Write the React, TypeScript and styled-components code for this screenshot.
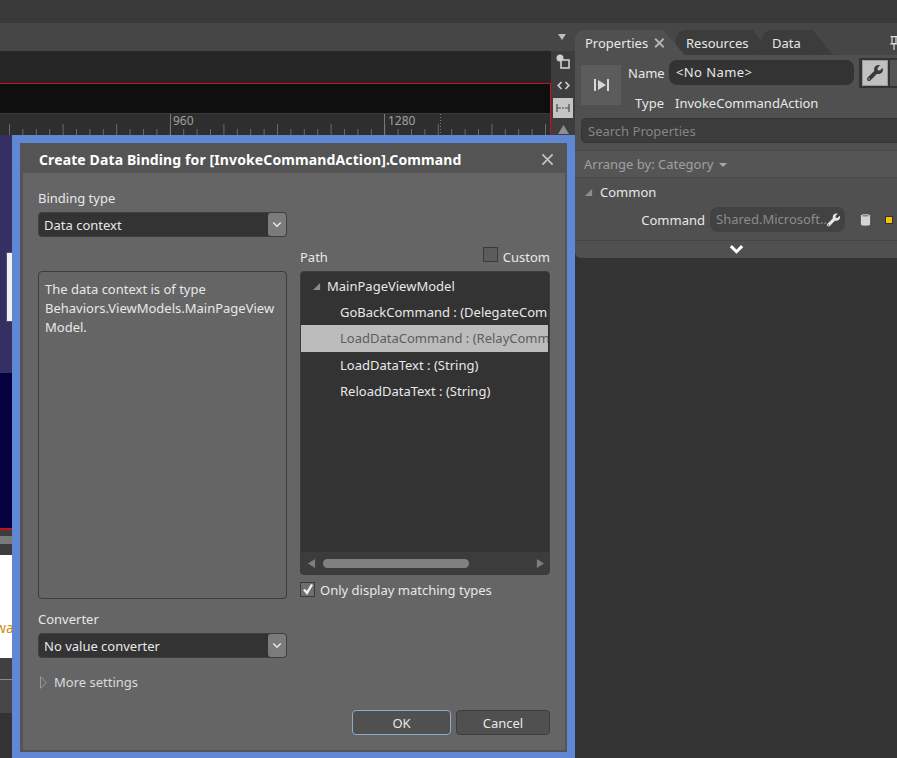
import React from "react";
import styled, { createGlobalStyle } from "styled-components";
import { FaWrench } from "react-icons/fa";

const Global = createGlobalStyle`
  html, body { margin: 0; padding: 0; background: #333; overflow: hidden; }
  #root { width: 897px; height: 758px; }
  * { box-sizing: border-box; }
`;

const Page = styled.div`
  position: relative;
  width: 897px;
  height: 758px;
  overflow: hidden;
  background: #333;
  font-family: "Noto Sans", "Open Sans", sans-serif;
  font-size: 13px;
  color: #e8e8e8;
  display: flex;
  flex-direction: column;
`;
const TopStrip = styled.div`height: 23px; background: #3a3a3a; flex: none;`;
const Workspace = styled.div`flex: 1; display: grid; grid-template-columns: 575px 322px; min-height: 0;`;

/* left: designer */
const Designer = styled.div`display: flex; flex-direction: column; min-width: 0;`;
const DocBar = styled.div`
  height: 28px; background: #464646; display: flex; align-items: center; justify-content: flex-end; padding-right: 9px; flex: none;
`;
const DocCaret = styled.div`
  width: 0; height: 0; border-left: 4.5px solid transparent; border-right: 4.5px solid transparent; border-top: 6px solid #bdbdbd;
`;
const DesignRow = styled.div`display: flex; height: 84px; flex: none;`;
const DesignStage = styled.div`width: 551px; display: flex; flex-direction: column;`;
const StageDark = styled.div`height: 32px; background: #262626;`;
const StageBlack = styled.div`height: 30px; background: #0f0f0f; border-top: 1px solid #d01018; border-right: 1px solid #d01018;`;
const Ruler = styled.div`
  position: relative; height: 22px; background: #2e2e2e; border-top: 1px solid #3a3a3a; border-right: 1px solid #d01018;
`;
const RulerNum = styled.span<{ $x: number }>`
  position: absolute; left: ${(p) => p.$x}px; top: -1px; font-size: 12px; line-height: 15px; color: #a0a0a0;
`;
const SideBar = styled.div`
  width: 24px; background: #3d3d3d; display: flex; flex-direction: column; align-items: center;
`;
const SideBtn = styled.div<{ $on?: boolean; $h: number; $pt?: number }>`
  width: 20px; height: ${(p) => p.$h}px; padding-top: ${(p) => p.$pt ?? 0}px; display: flex; align-items: center; justify-content: center;
  background: ${(p) => (p.$on ? "#c4c4c4" : "transparent")};
`;
const CanvasCol = styled.div`flex: 1; display: flex; flex-direction: column; width: 12px; min-height: 0;`;
const Band = styled.div<{ $h: number; $bg: string }>`
  position: relative; height: ${(p) => p.$h}px; background: ${(p) => p.$bg}; flex: none; overflow: hidden;
`;
const WhiteTab = styled.div`
  position: absolute; left: 6px; top: 117px; width: 8px; height: 70px; background: #f2f2f2; border: 1px solid #55506f;
`;
const WaText = styled.span`
  position: absolute; left: -5px; top: 64px; font-size: 14px; line-height: 18px; color: #c8900f;
`;

/* right: properties */
const PropsCol = styled.div`display: flex; flex-direction: column; background: #333;`;
const TabZone = styled.div`padding-top: 7px; background: #464646; flex: none;`;
const TabRow = styled.div`height: 25px; display: flex; align-items: stretch; position: relative;`;
const Tab = styled.div<{ $active?: boolean; $w: number; $ml?: number }>`
  position: relative; width: ${(p) => p.$w}px; margin-left: ${(p) => p.$ml ?? 0}px;
  padding-left: 10px; display: flex; align-items: center; gap: 6px;
  background: ${(p) => (p.$active ? "#505050" : "#3c3c3c")};
  border-radius: 9px 0 0 0;
  z-index: ${(p) => (p.$active ? 2 : 1)};
  &::after {
    content: ""; position: absolute; top: 0; bottom: 0; right: -9px; width: 18px;
    background: inherit; transform: skewX(40deg); border-radius: 4px 0 0 0;
    z-index: -1;
  }
`;
const Pin = styled.div`position: absolute; right: -1px; top: 6px;`;
const Panel = styled.div`
  height: 203px; background: #505050; border-radius: 0 0 0 6px; display: flex; flex-direction: column; flex: none;
`;
const NameBlock = styled.div`display: grid; grid-template-columns: 40px 1fr; column-gap: 7px; padding: 5px 0 0 6px; height: 63px;`;
const TypeIcon = styled.div`
  width: 40px; height: 40px; margin-top: 5px; background: #5c5c5c; display: flex; align-items: center; justify-content: center;
`;
const NameRows = styled.div`display: flex; flex-direction: column;`;
const NameRow = styled.div`display: flex; align-items: center; height: 25px;`;
const TypeRow = styled(NameRow)`margin-top: 5px;`;
const RightLabel = styled.span`width: 36px; text-align: right; flex: none; line-height: 18px;`;
const NameInput = styled.div`
  margin-left: 5px; width: 185px; height: 25px; background: #333; border-radius: 8px; padding-left: 7px; line-height: 25px; letter-spacing: 0.4px; flex: none;
`;
const TypeValue = styled.span`margin-left: 11px;`;
const ModeGroup = styled.div`
  margin-left: 5px; height: 30px; flex: 1; display: flex; background: #333; padding: 2px 0 2px 3px; gap: 2px;
`;
const ModeBtn = styled.div<{ $on?: boolean }>`
  width: 26px; flex: none; display: flex; align-items: center; justify-content: center;
  background: ${(p) => (p.$on ? "#c0c0c0" : "#555")};
  border: ${(p) => (p.$on ? "1px solid #999" : "none")};
  color: #3a3a3a;
  font-size: 16px;
`;
const Search = styled.div`
  margin-left: 6px; height: 25px; background: #3c3c3c; border: 1px solid #353535; border-right: none; border-radius: 5px 0 0 5px;
  padding-left: 6px; line-height: 25px; color: #858585;
`;
const ArrangeBar = styled.div`
  margin-top: 7px; height: 28px; padding-left: 9px; background: #555; border-top: 1px solid #474747; border-bottom: 1px solid #474747;
  display: flex; align-items: center; gap: 6px; color: #a0a0a0;
`;
const SmallCaret = styled.div`
  width: 0; height: 0; border-left: 4px solid transparent; border-right: 4px solid transparent; border-top: 4px solid #a8a8a8; margin-top: 1px;
`;
const CategoryRow = styled.div`height: 28px; display: flex; align-items: center; padding-left: 9px; gap: 7px;`;
const CommandRow = styled.div`height: 27px; display: flex; align-items: center;`;
const CmdLabel = styled.span`width: 130px; text-align: right; flex: none;`;
const CmdField = styled.div`
  position: relative; margin-left: 5px; width: 135px; height: 25px; border-radius: 8px; background: #424242; color: #8c8c8c;
  padding-left: 6px; line-height: 25px; display: flex; justify-content: space-between; align-items: center; padding-right: 5px;
`;
const CmdIcons = styled.div`margin-left: 15px; display: flex; align-items: center; gap: 14px;`;
const Marker = styled.div`width: 8px; height: 8px; background: #f6c300; border: 1px solid #333;`;
const ExpandRow = styled.div`
  margin-top: 7px; flex: 1; border-top: 1px solid #454545; display: flex; align-items: center; justify-content: center; width: 100%;
`;
const ExpandInner = styled.div`width: 328px; display: flex; justify-content: center;`;

/* dialog */
const Dialog = styled.div`
  position: absolute; left: 12px; top: 135px; width: 563px; height: 623px; background: #5f87d3; padding: 8px 8px 6px 8px;
`;
const DialogInner = styled.div`
  height: 609px; background: #545454; display: flex; flex-direction: column; padding: 0 2px 2px 3px;
`;
const DialogHead = styled.div`
  height: 30px; flex: none; display: flex; align-items: center; justify-content: space-between; padding: 2px 11px 0 16px;
  font-weight: 700; font-size: 14px; letter-spacing: 0.115px; color: #fff;
`;
const DialogBody = styled.div`
  flex: 1; background: #656565; padding: 16px 15px 0; display: flex; flex-direction: column;
`;
const Columns = styled.div`display: grid; grid-template-columns: 249px 250px; column-gap: 13px;`;
const Col = styled.div`display: flex; flex-direction: column;`;
const Label = styled.div`height: 18px; line-height: 18px; margin-bottom: 5px;`;
const SelectBox = styled.div`
  height: 25px; background: #333; border: 1px solid #3f3f3f; border-radius: 4px; display: flex; align-items: center; justify-content: space-between;
  padding-left: 5px;
`;
const SelectText = styled.span`padding-top: 1px; line-height: 18px;`;
const SelectBtn = styled.div`
  width: 18px; height: 23px; background: #7b7b7b; border-radius: 3px; display: flex; align-items: center; justify-content: center;
`;
const Description = styled.div`
  margin-top: 34px; height: 328px; border: 1px solid #3c3c3c; border-radius: 4px; padding: 8px 6px; line-height: 19px; margin-bottom: 11px;
`;
const MoreRow = styled.div`margin-top: 15px; height: 18px; display: flex; align-items: center; gap: 7px; padding-left: 2px; color: #dcdcdc;`;
const PathHead = styled.div`
  margin-top: 59px; height: 18px; margin-bottom: 5px; display: flex; align-items: center; justify-content: space-between;
`;
const CheckRow = styled.div`display: flex; align-items: center; gap: 5px; line-height: 18px;`;
const CheckBox = styled.div<{ $on?: boolean; $lift: number }>`
  width: 15px; height: 15px; margin-bottom: ${(p) => p.$lift}px; margin-left: ${(p) => (p.$on ? 0 : -1)}px;
  border: 1px solid #3a3a3a; background: ${(p) => (p.$on ? "#6e6e6e" : "#5c5c5c")};
  display: flex; align-items: center; justify-content: center;
`;
const Tree = styled.div`
  height: 304px; background: #333; border: 1px solid #3c3c3c; border-radius: 4px; display: flex; flex-direction: column; overflow: hidden;
`;
const TreeList = styled.div`flex: 1; padding-top: 1px; min-height: 0; overflow: hidden;`;
const TreeRoot = styled.div`height: 26px; display: flex; align-items: center; gap: 6px; padding-left: 11px;`;
const TreeItem = styled.div<{ $on?: boolean }>`
  height: 26.4px; line-height: 26px; padding-left: 39px; margin-right: 1px; white-space: nowrap; overflow: hidden;
  background: ${(p) => (p.$on ? "#bcbcbc" : "transparent")};
  color: ${(p) => (p.$on ? "#5d5d5d" : "#e8e8e8")};
`;
const HScroll = styled.div`
  height: 22px; flex: none; background: #3c3c3c; display: flex; align-items: center; justify-content: space-between; padding: 0 4px 0 6px;
`;
const HThumb = styled.div`width: 146px; height: 9px; border-radius: 5px; background: #808080; margin-left: 7px; margin-right: auto;`;
const MatchRow = styled(CheckRow)`margin-top: 6px;`;
const Footer = styled.div`margin-top: 19px; display: flex; justify-content: flex-end; gap: 5px;`;
const Button = styled.div<{ $w: number; $primary?: boolean }>`
  width: ${(p) => p.$w}px; height: 25px; border-radius: 4px; background: #505050; text-align: center; line-height: 23px; padding-top: 1px;
  border: 1px solid ${(p) => (p.$primary ? "#8eacc8" : "#3c3c3c")};
`;
const CloseGlyph = styled.div`display: flex; width: 13px; height: 13px;`;

const Tri = ({ d, c = "#9a9a9a", w = 9, h = 9 }: { d: string; c?: string; w?: number; h?: number }) => (
  <svg width={w} height={h} viewBox="0 0 10 10" aria-hidden="true"><path d={d} fill={c} stroke="none" /></svg>
);
const Chevron = ({ size = 12, c = "#fff", sw = 2 }: { size?: number; c?: string; sw?: number }) => (
  <svg width={size} height={size * 0.7} viewBox="0 0 12 8" aria-hidden="true"><path d="M1.5 1.5 L6 6 L10.5 1.5" fill="none" stroke={c} strokeWidth={sw} /></svg>
);
const CrossIcon = ({ s, c, sw }: { s: number; c: string; sw: number }) => (
  <svg width={s} height={s} viewBox="0 0 14 14" aria-hidden="true"><path d="M1.5 1.5 L12.5 12.5 M12.5 1.5 L1.5 12.5" stroke={c} strokeWidth={sw} fill="none" /></svg>
);

const rulerTicks = () => {
  const out: React.ReactNode[] = [];
  for (let i = 0; i < 41; i++) {
    const x = 9.5 + i * 13.4;
    const major = i % 4 === 0;
    out.push(<line key={i} x1={x} x2={x} y1={major ? 10 : 15} y2={21} stroke="#6a6a6a" strokeWidth="1" />);
  }
  return out;
};

const App: React.FC = () => (
  <Page>
    <Global />
    <TopStrip />
    <Workspace>
      <Designer>
        <DocBar><DocCaret /></DocBar>
        <DesignRow>
          <DesignStage>
            <StageDark />
            <StageBlack />
            <Ruler>
              <svg width="550" height="21" style={{ display: "block" }} aria-hidden="true">
                {rulerTicks()}
                <line x1="170.5" x2="170.5" y1="0" y2="21" stroke="#777" />
                <line x1="384.5" x2="384.5" y1="0" y2="21" stroke="#777" />
                <line x1="440.5" x2="440.5" y1="0" y2="21" stroke="#777" strokeDasharray="1 2" />
              </svg>
              <RulerNum $x={173}>960</RulerNum>
              <RulerNum $x={388}>1280</RulerNum>
            </Ruler>
          </DesignStage>
          <SideBar>
            <SideBtn $h={21}>
              <svg width="14" height="15" viewBox="0 0 14 15" aria-hidden="true">
                <circle cx="4" cy="4" r="3.5" fill="#d0d0d0" />
                <rect x="5" y="6" width="8" height="8" fill="#3d3d3d" stroke="#d0d0d0" strokeWidth="1.6" />
              </svg>
            </SideBtn>
            <SideBtn $h={26}>
              <svg width="13" height="9" viewBox="0 0 13 9" aria-hidden="true">
                <path d="M4.5 1 L1.2 4.5 L4.5 8 M8.5 1 L11.8 4.5 L8.5 8" fill="none" stroke="#d0d0d0" strokeWidth="1.7" />
              </svg>
            </SideBtn>
            <SideBtn $on $h={20}>
              <svg width="14" height="10" viewBox="0 0 14 10" aria-hidden="true">
                <path d="M1 1 V9 M13 1 V9 M1 5 H5 M9 5 H13" stroke="#4a4a4a" strokeWidth="1.2" fill="none" />
                <path d="M6 5 H8" stroke="#4a4a4a" strokeWidth="1" />
              </svg>
            </SideBtn>
            <SideBtn $h={17} $pt={6}>
              <Tri d="M5 1 L10 9 L0 9 Z" c="#8e8e8e" w={11} h={11} />
            </SideBtn>
          </SideBar>
        </DesignRow>
        <CanvasCol>
          <Band $h={238} $bg="#362f63"><WhiteTab /></Band>
          <Band $h={155} $bg="#05003f" />
          <Band $h={2} $bg="#c0141c" />
          <Band $h={6} $bg="#3c3c3c" />
          <Band $h={8} $bg="#7a7a7a" />
          <Band $h={11} $bg="#3d3d3d" />
          <Band $h={103} $bg="#ffffff"><WaText>wa</WaText></Band>
          <Band $h={21} $bg="#404040" />
          <Band $h={1} $bg="#8a8a8a" />
          <Band $h={33} $bg="#474747" />
          <Band $h={46} $bg="#333333" />
        </CanvasCol>
      </Designer>
      <PropsCol>
        <TabZone>
          <TabRow>
            <Tab $active $w={90}>Properties <CrossIcon s={12} c="#b5b5b5" sw={2.4} /></Tab>
            <Tab $w={78} $ml={11}>Resources</Tab>
            <Tab $w={52} $ml={8}>Data</Tab>
            <Pin>
              <svg width="8" height="14" viewBox="0 0 8 14" aria-hidden="true">
                <path d="M0.5 0.6 H7.5 M2 0.6 V7.5 H6 V0.6 M0 8 H8 M4 8 V14" stroke="#e0e0e0" strokeWidth="1.2" fill="none" />
              </svg>
            </Pin>
          </TabRow>
        </TabZone>
        <Panel>
          <NameBlock>
            <TypeIcon>
              <svg width="17" height="14" viewBox="0 0 17 14" aria-hidden="true">
                <path d="M1 1 H3 V13 H1 Z M14 1 H16 V13 H14 Z M5 2 L13 7 L5 12 Z" fill="#d8d8d8" />
              </svg>
            </TypeIcon>
            <NameRows>
              <NameRow>
                <RightLabel>Name</RightLabel>
                <NameInput>&lt;No Name&gt;</NameInput>
                <ModeGroup>
                  <ModeBtn $on><FaWrench /></ModeBtn>
                  <ModeBtn />
                </ModeGroup>
              </NameRow>
              <TypeRow>
                <RightLabel>Type</RightLabel>
                <TypeValue>InvokeCommandAction</TypeValue>
              </TypeRow>
            </NameRows>
          </NameBlock>
          <Search>Search Properties</Search>
          <ArrangeBar>Arrange by: Category <SmallCaret /></ArrangeBar>
          <CategoryRow>
            <Tri d="M9 1 V9 H1 Z" c="#8e8e8e" />
            Common
          </CategoryRow>
          <CommandRow>
            <CmdLabel>Command</CmdLabel>
            <CmdField>
              Shared.Microsoft..
              <FaWrench color="#e6e6e6" size={16} />
            </CmdField>
            <CmdIcons>
              <svg width="11" height="14" viewBox="0 0 12 15" aria-hidden="true">
                <path d="M1 2.5 C1 0.8 11 0.8 11 2.5 V12.5 C11 14.2 1 14.2 1 12.5 Z" fill="#d4d4d4" />
                <ellipse cx="6" cy="2.8" rx="3.6" ry="1" fill="#8a8a8a" />
              </svg>
              <Marker />
            </CmdIcons>
          </CommandRow>
          <ExpandRow>
            <ExpandInner><Chevron size={15} sw={2.4} /></ExpandInner>
          </ExpandRow>
        </Panel>
      </PropsCol>
    </Workspace>

    <Dialog>
      <DialogInner>
        <DialogHead>
          Create Data Binding for [InvokeCommandAction].Command
          <CloseGlyph><CrossIcon s={13} c="#c4c4c4" sw={1.8} /></CloseGlyph>
        </DialogHead>
        <DialogBody>
          <Columns>
            <Col>
              <Label>Binding type</Label>
              <SelectBox>
                <SelectText>Data context</SelectText>
                <SelectBtn><Chevron size={10} c="#e8e8e8" sw={1.8} /></SelectBtn>
              </SelectBox>
              <Description>
                The data context is of type<br />
                Behaviors.ViewModels.MainPageView<br />
                Model.
              </Description>
              <Label>Converter</Label>
              <SelectBox>
                <SelectText>No value converter</SelectText>
                <SelectBtn><Chevron size={10} c="#e8e8e8" sw={1.8} /></SelectBtn>
              </SelectBox>
              <MoreRow>
                <svg width="7" height="13" viewBox="0 0 7 13" aria-hidden="true">
                  <path d="M0.5 0.7 L6.3 6.5 L0.5 12.3 Z" fill="none" stroke="#9a9a9a" strokeWidth="1" />
                </svg>
                More settings
              </MoreRow>
            </Col>
            <Col>
              <PathHead>
                Path
                <CheckRow><CheckBox $lift={6} />Custom</CheckRow>
              </PathHead>
              <Tree>
                <TreeList>
                  <TreeRoot>
                    <Tri d="M9 1 V9 H1 Z" c="#8a8a8a" />
                    MainPageViewModel
                  </TreeRoot>
                  <TreeItem>GoBackCommand : (DelegateCommand)</TreeItem>
                  <TreeItem $on>LoadDataCommand : (RelayCommand)</TreeItem>
                  <TreeItem>LoadDataText : (String)</TreeItem>
                  <TreeItem>ReloadDataText : (String)</TreeItem>
                </TreeList>
                <HScroll>
                  <Tri d="M9 0 V10 L1 5 Z" c="#7e7e7e" />
                  <HThumb />
                  <Tri d="M1 0 V10 L9 5 Z" c="#7e7e7e" />
                </HScroll>
              </Tree>
              <MatchRow>
                <CheckBox $on $lift={2}>
                  <svg width="12" height="12" viewBox="0 0 12 12" aria-hidden="true">
                    <path d="M2 6.5 L5 10 L10 1.5" fill="none" stroke="#f2f2f2" strokeWidth="2.4" />
                  </svg>
                </CheckBox>
                Only display matching types
              </MatchRow>
            </Col>
          </Columns>
          <Footer>
            <Button $w={99} $primary>OK</Button>
            <Button $w={94}>Cancel</Button>
          </Footer>
        </DialogBody>
      </DialogInner>
    </Dialog>
  </Page>
);

export default App;
